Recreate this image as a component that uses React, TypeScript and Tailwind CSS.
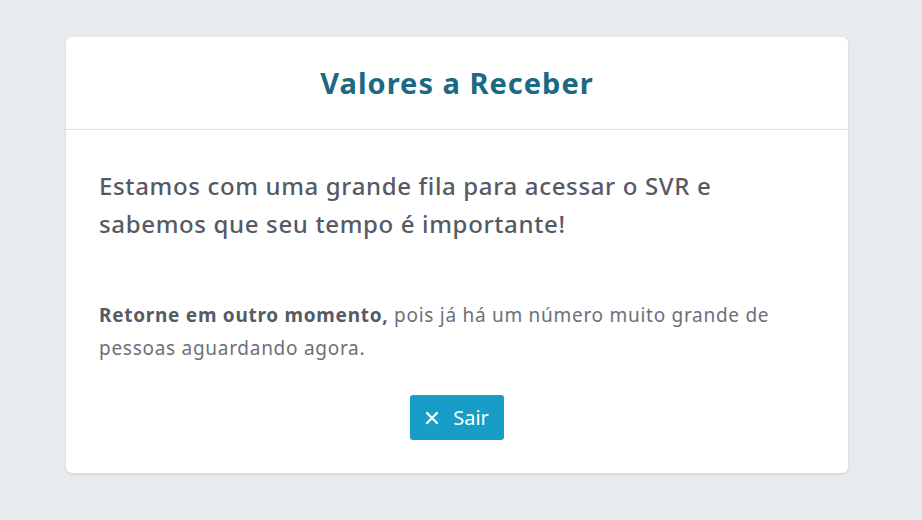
import React from "react";

function CloseIcon() {
    return (
        <svg width="14" height="14" viewBox="0 0 14 14" fill="none" stroke="currentColor" strokeWidth="2.2" strokeLinecap="round">
            <path d="M2 2 L12 12 M12 2 L2 12" />
        </svg>
    );
}

export default function App() {
    return (
        <div className="min-h-[520px] w-full bg-[#e8ebee] pt-[37px] pl-[66px] font-['Noto_Sans',sans-serif]">
            <div className="w-[782px] bg-white rounded-md shadow-sm flex flex-col">
                <div className="h-[93px] border-b border-[#dee2e6] flex items-center justify-center">
                    <h1 className="text-[29px] font-bold tracking-[1px] text-[#1b6983]">Valores a Receber</h1>
                </div>
                <div className="px-[33px] pt-[37px] pb-[33px] flex flex-col">
                    <p className="text-[24px] leading-[38px] font-medium tracking-[0.65px] text-[#555a65]">
                        Estamos com uma grande fila para acessar o SVR e<br />
                        sabemos que seu tempo é importante!
                    </p>
                    <p className="mt-[56px] text-[19px] leading-[33px] tracking-[0.72px] text-[#6b707a]">
                        <b className="font-bold text-[#555a65]">Retorne em outro momento,</b> pois já há um número muito grande de<br />
                        pessoas aguardando agora.
                    </p>
                    <div className="mt-[30px] flex justify-center">
                        <button className="h-[45px] w-[94px] justify-center rounded-[3px] bg-[#189dc7] text-white text-[20px] flex items-center gap-[14px]">
                            <CloseIcon />
                            Sair
                        </button>
                    </div>
                </div>
            </div>
        </div>
    );
}
